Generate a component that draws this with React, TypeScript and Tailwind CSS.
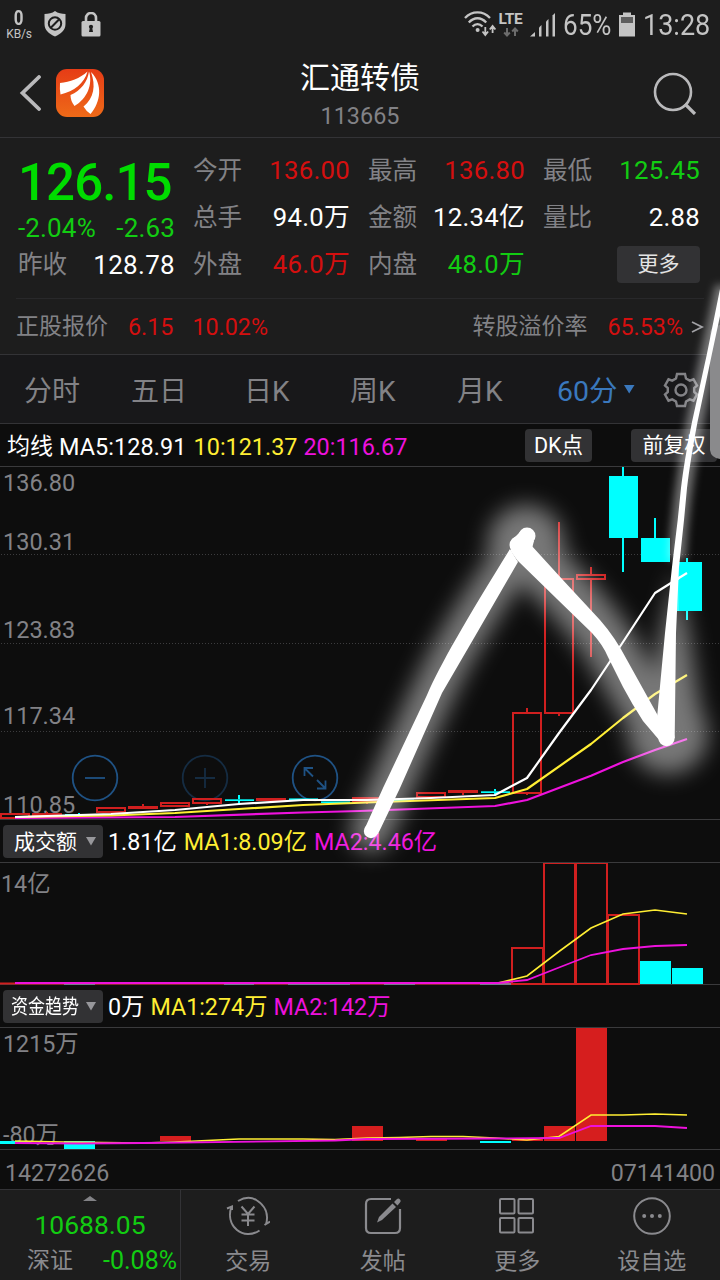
import React from 'react';

const RED = '#d01f1f';
const CYAN = '#00ffff';
const YELLOW = '#ffee33';
const MAGENTA = '#ee11dd';

type Cell = { label: string; value: string; tone: string };

const quoteColumns: { className: string; cells: Cell[] }[] = [
  {
    className: 'ml-[18px] w-[157px]',
    cells: [
      { label: '今开', value: '136.00', tone: 'text-[#d40f0f]' },
      { label: '总手', value: '94.0万', tone: 'text-white' },
      { label: '外盘', value: '46.0万', tone: 'text-[#d40f0f]' },
    ],
  },
  {
    className: 'ml-[18px] w-[157px]',
    cells: [
      { label: '最高', value: '136.80', tone: 'text-[#d40f0f]' },
      { label: '金额', value: '12.34亿', tone: 'text-white' },
      { label: '内盘', value: '48.0万', tone: 'text-[#12cc12]' },
    ],
  },
  {
    className: 'ml-[18px] w-[157px]',
    cells: [
      { label: '最低', value: '125.45', tone: 'text-[#12cc12]' },
      { label: '量比', value: '2.88', tone: 'text-white' },
    ],
  },
];

// x = centre of the candle, every period is 32px wide
type Candle = { x: number; top: number; bottom: number; high?: number; low?: number; up: boolean };

const candles: Candle[] = [
  { x: 15, top: 814, bottom: 818, up: true },
  { x: 47, top: 814, bottom: 816, high: 812, up: true },
  { x: 79, top: 814, bottom: 815.5, high: 813, up: false },
  { x: 111, top: 808, bottom: 812, up: true },
  { x: 143, top: 807, bottom: 808, high: 804, up: true },
  { x: 175, top: 803, bottom: 806, up: true },
  { x: 207, top: 799, bottom: 803, low: 805, up: true },
  { x: 239, top: 799.3, bottom: 801, high: 795, low: 804, up: false },
  { x: 271, top: 799, bottom: 800, up: true },
  { x: 303, top: 798.4, bottom: 800, up: false },
  { x: 335, top: 801.4, bottom: 803, low: 804, up: false },
  { x: 367, top: 798, bottom: 801, low: 804, up: true },
  { x: 399, top: 799.5, bottom: 801, high: 798, up: false },
  { x: 431, top: 793, bottom: 797, up: true },
  { x: 463, top: 791, bottom: 792, low: 795, up: true },
  { x: 495, top: 791.3, bottom: 793, high: 789, low: 795, up: false },
  { x: 527, top: 713, bottom: 793, high: 708, low: 795, up: true },
  { x: 559, top: 579, bottom: 713, high: 522, low: 716, up: true },
  { x: 591, top: 575, bottom: 579, high: 567, low: 657, up: true },
  { x: 623, top: 476, bottom: 538, high: 466, low: 572, up: false },
  { x: 655, top: 538, bottom: 562, high: 518, low: 562, up: false },
  { x: 687, top: 562, bottom: 611, high: 558, low: 620, up: false },
];

const tabs = [
  { label: '分时', className: 'ml-[24px] w-[107px]' },
  { label: '五日', className: 'w-[113px]' },
  { label: '日K', className: 'w-[106px]' },
  { label: '周K', className: 'w-[107px]' },
  { label: '月K', className: 'w-[100px]' },
];

function StatusBar() {
  return (
    <div className="flex h-12 shrink-0 items-center text-[#c4c4c4]">
      <div className="ml-[6px] mt-[2px] flex w-[26px] flex-col items-center">
        <span className="origin-center scale-x-[0.85] text-[20px] font-bold leading-[19px]">0</span>
        <span className="text-[12px] leading-[13px] tracking-[-0.2px]">KB/s</span>
      </div>
      <svg className="ml-[12px]" width="22" height="26" viewBox="0 0 22 26">
        <path d="M11 0 C14 2.2 17.5 3 21.5 3 V13 C21.5 19 17 23 11 25.5 C5 23 .5 19 .5 13 V3 C4.5 3 8 2.2 11 0Z" fill="currentColor" />
        <circle cx="11" cy="12.5" r="6.2" fill="none" stroke="#1d1d1d" strokeWidth="2" />
        <path d="M6.8 16.8 15.2 8.2" stroke="#1d1d1d" strokeWidth="2" />
      </svg>
      <svg className="ml-[15px]" width="20" height="25" viewBox="0 0 20 25">
        <path d="M5 10 V6 a5 5 0 0 1 10 0 V10" fill="none" stroke="currentColor" strokeWidth="2.6" />
        <rect x="0.5" y="9" width="19" height="15.5" rx="1.5" fill="currentColor" />
        <circle cx="10" cy="14.8" r="2.1" fill="#1d1d1d" />
        <path d="M9 15 H11 L12 20 H8Z" fill="#1d1d1d" />
      </svg>

      <div className="ml-auto mr-[10px] flex items-center">
        <svg width="33" height="26" viewBox="0 0 33 26" fill="none" stroke="currentColor">
          <path d="M1 7 C8 -.5 19 -.5 26 7" strokeWidth="2.3" />
          <path d="M4.8 11.5 C10 5.8 17 5.8 22.2 11.5" strokeWidth="2.3" />
          <path d="M8.5 15.5 C11.5 12.3 15.5 12.3 18.5 15.5" strokeWidth="2.3" />
          <circle cx="13.6" cy="19" r="2" fill="currentColor" stroke="none" />
          <path d="M21.3 16 V23 M18.5 20.5 21.3 24 24.1 20.5 M28.6 22 V15 M25.8 18.5 28.6 15 31.4 18.5" strokeWidth="1.8" />
        </svg>
        <div className="flex w-[27px] flex-col items-center">
          <span className="text-[15.5px] font-bold leading-[15px] tracking-[-0.3px]">LTE</span>
          <svg width="16" height="10" viewBox="0 0 16 10" fill="none" stroke="#6c6c6c" strokeWidth="2">
            <path d="M4 1 V8 M1.2 5.5 4 8.5 6.8 5.5 M12 9 V2 M9.2 4.5 12 1.5 14.8 4.5" />
          </svg>
        </div>
        <svg className="ml-[6px]" width="26" height="25" viewBox="0 0 26 25" fill="currentColor">
          <path d="M0 24.5 L5 20 V24.5Z" />
          <path d="M9 15.5 L11.5 13 V24.5 H9Z" />
          <path d="M16 9.5 L18.5 7 V24.5 H16Z" />
          <path d="M22.5 3.5 L25 1 V24.5 H22.5Z" />
        </svg>
        <span className="ml-[7px] mt-[2px] w-[49px] origin-left scale-x-[0.87] text-[30px] leading-[30px]">65%</span>
        <svg className="ml-[7px]" width="16" height="25" viewBox="0 0 16 25">
          <path d="M4 0.5 H12 V3 H16 V24.5 H0 V3 H4Z" fill="currentColor" />
          <rect x="2" y="5" width="12" height="6" fill="#5e5e5e" />
        </svg>
        <span className="ml-[8px] mt-[2px] w-[67px] origin-left scale-x-[0.9] text-[30px] leading-[30px]">13:28</span>
      </div>
    </div>
  );
}

function TitleBar() {
  return (
    <header className="flex h-[90px] shrink-0 items-center border-b border-[#333336]">
      <svg className="ml-[19px]" width="23" height="36" viewBox="0 0 23 36">
        <path d="M20 2 3.5 18 20 34" fill="none" stroke="#b9b9bb" strokeWidth="3.8" strokeLinecap="round" />
      </svg>
      <svg className="ml-[14px]" width="48" height="48" viewBox="0 0 48 48">
        <defs>
          <linearGradient id="logo" x1="0" y1="0" x2="0" y2="1">
            <stop offset="0" stopColor="#e63c16" />
            <stop offset="1" stopColor="#ee6a18" />
          </linearGradient>
        </defs>
        <rect width="48" height="48" rx="11" fill="url(#logo)" />
        <path d="M4 14 C14 13 24 9.5 31.5 2.5 C28.5 14 18 22.5 4.5 25.5 Q3.5 20 4 14Z" fill="#fff" />
        <path d="M14.5 26 C25 21.5 31.5 13 33 2.5 C37 15 31.5 29.5 18.5 37 Q14.5 32 14.5 26Z" fill="#fff" />
        <path d="M35 3 C47 15 45 33 34.5 45 Q30 42 27.5 37.5 C38 29 40 17 35 3Z" fill="#fff" />
      </svg>
      <div className="ml-[196px] mt-[5px] flex w-[120px] flex-col items-center">
        <h1 className="whitespace-nowrap text-[30px] leading-[36px] text-white">汇通转债</h1>
        <span className="mt-[6px] text-[23.4px] leading-[28px] text-[#828286]">113665</span>
      </div>
      <svg className="ml-auto mr-[23px]" width="44" height="44" viewBox="0 0 44 44" fill="none" stroke="#b9b9bb">
        <circle cx="20" cy="21" r="18" strokeWidth="2.6" />
        <path d="M32 33 42 43" strokeWidth="3.2" />
      </svg>
    </header>
  );
}

function QuotePanel() {
  return (
    <section className="flex h-[217px] shrink-0 flex-col border-b border-[#333336] px-4">
      <div className="flex h-[161px] border-b border-[#28282a] pt-[9px]">
        <div className="flex w-[159px] flex-col">
          <span className="ml-[2px] mt-[9px] h-[54px] text-[51px] font-medium leading-[54px] tracking-[-0.9px] text-[#00dc00]">126.15</span>
          <div className="mt-[3px] flex justify-between pl-[2px] text-[26px] leading-[30px] tracking-[0.15px] text-[#12cc12]">
            <span>-2.04%</span>
            <span>-2.63</span>
          </div>
          <div className="mt-[6px] flex items-center justify-between pl-[2px] leading-[30px]">
            <span className="mt-[1px] text-[24.6px] text-[#828286]">昨收</span>
            <span className="text-[26px] tracking-[0.3px] text-white">128.78</span>
          </div>
        </div>
        {quoteColumns.map((column, i) => (
          <div key={i} className={`flex flex-col ${column.className}`}>
            {column.cells.map((cell) => (
              <div key={cell.label} className="flex h-[47px] items-center justify-between whitespace-nowrap">
                <span className="mt-[1px] text-[24.6px] leading-[30px] text-[#828286]">{cell.label}</span>
                <span className={`-mt-[1px] text-[25.7px] leading-[30px] tracking-[0.3px] ${cell.tone}`}>{cell.value}</span>
              </div>
            ))}
            {i === 2 && (
              <button className="mt-[5px] h-[37px] w-[83px] self-end rounded-[4px] bg-[#323234] text-[21px] leading-[37px] text-[#e4e4e4]">
                更多
              </button>
            )}
          </div>
        ))}
      </div>
      <div className="flex h-[55px] items-center whitespace-nowrap text-[23.3px] leading-[30px] text-[#d40f0f]">
        <span className="text-[23px] text-[#828286]">正股报价</span>
        <span className="ml-[20px]">6.15</span>
        <span className="ml-[19px]">10.02%</span>
        <span className="ml-auto text-[23px] text-[#828286]">转股溢价率</span>
        <span className="ml-[20px]">65.53%</span>
        <svg className="ml-[8px]" width="13" height="14" viewBox="0 0 13 14">
          <path d="M1 2 11 7 1 12" fill="none" stroke="#a0a0a4" strokeWidth="1.8" />
        </svg>
      </div>
    </section>
  );
}

function PeriodTabs() {
  return (
    <nav className="flex h-[69px] shrink-0 items-center border-b border-[#333336] bg-[#18181a] text-[28px] leading-[34px] text-[#828286]">
      {tabs.map((tab) => (
        <span key={tab.label} className={`mt-[6px] shrink-0 whitespace-nowrap ${tab.className}`}>
          {tab.label}
        </span>
      ))}
      <span className="mt-[6px] shrink-0 text-[28.5px] text-[#3a78bd]">60分</span>
      <svg className="ml-[6px] mt-[2px] shrink-0" width="11" height="12" viewBox="0 0 11 12">
        <path d="M0 1 H10.5 L5.2 9.5Z" fill="#3a78bd" />
      </svg>
      <svg className="ml-[28px] mt-[2px] shrink-0" width="36" height="36" viewBox="0 0 36 36" fill="none" stroke="#828286" strokeWidth="2.4">
        <path d="M14 2 H22 L23 6.5 L26.8 8.6 L30.5 7.3 L34 13.5 L31.2 16 V20 L34 22.5 L30.5 28.7 L26.8 27.4 L23 29.5 L22 34 H14 L13 29.5 L9.2 27.4 L5.5 28.7 L2 22.5 L4.8 20 V16 L2 13.5 L5.5 7.3 L9.2 8.6 L13 6.5Z" />
        <circle cx="18" cy="18" r="5.5" />
      </svg>
    </nav>
  );
}

function Dropdown({ children }: { children: React.ReactNode }) {
  return (
    <div className="ml-[3px] mr-[5px] flex h-[33px] w-[100px] items-center rounded-[4px] bg-[#323234]">
      {children}
      <svg className="ml-auto mr-[7px]" width="10" height="10" viewBox="0 0 10 10">
        <path d="M0 1 H10 L5 9.5Z" fill="#97979b" />
      </svg>
    </div>
  );
}

function Candles() {
  return (
    <>
      {candles.map((c) => {
        const color = c.up ? RED : CYAN;
        return (
          <g key={c.x}>
            {c.high !== undefined && <path d={`M${c.x} ${c.high}V${c.top}`} stroke={color} strokeWidth="2" />}
            {c.low !== undefined && <path d={`M${c.x} ${c.bottom}V${c.low}`} stroke={color} strokeWidth="2" />}
            {c.up ? (
              <rect x={c.x - 14} y={c.top} width="28" height={c.bottom - c.top} fill="none" stroke={color} strokeWidth="2" />
            ) : (
              <rect x={c.x - 14} y={c.top} width="29" height={c.bottom - c.top} fill={color} />
            )}
          </g>
        );
      })}
    </>
  );
}

function PriceChart() {
  return (
    <section className="relative h-[353px] shrink-0 border-b border-[#3a3a3c] text-[23.5px] leading-[28px] text-[#828286]">
      <div className="flex h-full flex-col pl-[3px] pt-[2px]">
        <span className="h-[60px]">136.80</span>
        <span className="h-[89px]">130.31</span>
        <span className="h-[88px]">123.83</span>
        <span className="h-[90px]">117.34</span>
        <span>110.85</span>
      </div>
      <svg className="absolute left-0 top-0" width="720" height="353" viewBox="0 467 720 353" fill="none">
        <path d="M1 554.5H719M1 643.5H719M1 731.5H719" stroke="#3c3c3e" strokeDasharray="1 2" />
        <g stroke="#1f5284" strokeWidth="1.8">
          <circle cx="95" cy="778" r="22.3" />
          <path d="M85 778H105" />
          <g opacity="0.45">
            <circle cx="205" cy="778" r="22.3" />
            <path d="M195 778H215M205 768V788" />
          </g>
          <circle cx="315" cy="778" r="22.3" />
          <path d="M313 776.5 304.5 768M304.5 776V768H313M317 780 325.5 788.5M325.5 780.5V788.5H317" />
        </g>
        <Candles />
        <g strokeLinejoin="round">
          <path d="M15 818 175 817 303 812.5 360 811 495 806 527 800 591 775.7 623 762 655 750 687 739" stroke={MAGENTA} strokeWidth="2.2" />
          <path d="M15 817 111 815.5 175 813 239 809 303 805 367 802.5 495 798 527 789 591 744 623 718 655 694 687 675" stroke={YELLOW} strokeWidth="2.2" />
          <path d="M15 817 111 814 175 810 239 804 303 800 367 800 431 798 495 795 527 778 559 733 591 690 623 642 655 593 687 573" stroke="#fff" strokeWidth="2.2" />
        </g>
      </svg>
    </section>
  );
}

function VolumeChart() {
  return (
    <section className="relative h-[122px] shrink-0 border-b border-[#3a3a3c]">
      <span className="ml-[1px] mt-[7px] block text-[23.3px] leading-[28px] text-[#828286]">14亿</span>
      <svg className="absolute left-0 top-0" width="720" height="122" viewBox="0 863 720 122" fill="none">
        <path d="M0 983.5H512" stroke={RED} strokeWidth="2" />
        <path d="M64 984H95M224 984H254M288 984H350M384 984H415M480 984H512" stroke="#66ccee" strokeWidth="1" />
        <g stroke={RED} strokeWidth="2">
          <rect x="512" y="948" width="31" height="36" />
          <rect x="544" y="863" width="31" height="121" />
          <rect x="576" y="863" width="31" height="121" />
          <rect x="608" y="915" width="31" height="69" />
        </g>
        <path d="M640 961H671V984H640ZM672 968H703V984H672Z" fill={CYAN} />
        <path d="M15 983H498L527 976 559 951.5 591 928 623 914 655 910 687 914" stroke={YELLOW} strokeWidth="1.6" />
        <path d="M15 983H498L527 980 559 967.5 591 955 623 949 655 946 687 945" stroke={MAGENTA} strokeWidth="1.8" />
      </svg>
    </section>
  );
}

function FundChart() {
  return (
    <section className="relative h-[122px] shrink-0 border-b border-[#3a3a3c] text-[23.3px] leading-[28px] text-[#828286]">
      <div className="flex h-full flex-col pl-[3px] pt-[2px]">
        <span className="h-[96px]">1215万</span>
        <span>-80万</span>
      </div>
      <svg className="absolute left-0 top-0" width="720" height="122" viewBox="0 1028 720 122" fill="none">
        <path d="M160 1136H191V1141H160ZM352 1126H383V1141H352ZM416 1138H447V1141H416ZM512 1139H543V1141H512ZM544 1126H575V1141H544ZM576 1027H607V1141H576Z" fill="#d61e1e" />
        <path d="M0 1141H31V1144H0ZM64 1141H95V1149H64ZM480 1141H511V1143H480Z" fill={CYAN} />
        <path d="M15 1141 64 1142 143 1143 175 1142 239 1139 303 1139 335 1139.6 367 1138 399 1137.5 431 1136.5 463 1136.5 495 1138 527 1140 559 1136.5 591 1115 623 1115 655 1114 687 1115" stroke={YELLOW} strokeWidth="1.6" />
        <path d="M15 1143 79 1143.5 143 1143 335 1140.5 367 1139 495 1138.5 559 1138 591 1126 655 1126 687 1128" stroke={MAGENTA} strokeWidth="1.8" />
      </svg>
    </section>
  );
}

function BottomNav() {
  return (
    <footer className="flex h-[90px] shrink-0 text-[23px] leading-[28px] text-[#8a8a8e]">
      <div className="flex w-[181px] flex-col items-center border-r border-[#333336]">
        <svg className="mt-[6px]" width="14" height="5" viewBox="0 0 14 5">
          <path d="M0 5 7 0 14 5Z" fill="#828286" />
        </svg>
        <span className="mt-[9px] text-[26.5px] leading-[30px] text-[#12cc12]">10688.05</span>
        <div className="mt-[7px] flex w-full justify-between pl-[27px] pr-[3px]">
          <span>深证</span>
          <span className="text-[25px] text-[#12cc12]">-0.08%</span>
        </div>
      </div>
      <div className="mr-[1px] grid flex-1 grid-cols-4 text-center">
        <div className="flex flex-col items-center pt-[6px]">
          <svg width="44" height="40" viewBox="0 0 44 40" fill="none" stroke="currentColor" strokeWidth="2">
            <path d="M12 5 C18 1.5 25 .5 31 4.5 C39 9.5 43 18 40 28.5 M38.5 29 L44 25.5" />
            <path d="M1 12.5 L6 10.5 V14 M5.5 10.5 C2.5 19 4 28 11 34 C17 39 26 39.5 33.5 34.5" />
            <path d="M15.5 10.5 22 18 28.5 10.5M22 18V30M15.5 18.5H28.5M15.5 24.5H28.5" />
          </svg>
          <span className="mt-[12px]">交易</span>
        </div>
        <div className="flex flex-col items-center pt-[6px]">
          <svg width="40" height="40" viewBox="0 0 40 40" fill="none" stroke="currentColor" strokeWidth="2.2">
            <path d="M28 3 H8 Q3 3 3 8 V32 Q3 37 8 37 H32 Q37 37 37 32 V13" />
            <path d="M14 26.5 16 21 29.5 7.5 33 11 19 24Z" fill="currentColor" stroke="none" />
            <path d="M31 6 34 3 Q35.5 2 37 3.5 T37 6.5 L34.5 9.5Z" fill="currentColor" stroke="none" />
          </svg>
          <span className="mt-[12px]">发帖</span>
        </div>
        <div className="flex flex-col items-center pt-[6px]">
          <svg width="40" height="40" viewBox="0 0 40 40" fill="none" stroke="currentColor" strokeWidth="2">
            <rect x="3" y="3" width="14.5" height="14.5" rx="1" />
            <rect x="21.5" y="3" width="14.5" height="14.5" rx="1" />
            <rect x="3" y="22" width="14.5" height="14.5" rx="1" />
            <rect x="21.5" y="22" width="14.5" height="14.5" rx="1" />
          </svg>
          <span className="mt-[12px]">更多</span>
        </div>
        <div className="flex flex-col items-center pt-[6px]">
          <svg width="40" height="40" viewBox="0 0 40 40" fill="none" stroke="currentColor" strokeWidth="2">
            <circle cx="20" cy="20" r="17.8" />
            <g fill="currentColor" stroke="none">
              <circle cx="12.2" cy="20" r="2" />
              <circle cx="20" cy="20" r="2" />
              <circle cx="27.8" cy="20" r="2" />
            </g>
          </svg>
          <span className="mt-[12px]">设自选</span>
        </div>
      </div>
    </footer>
  );
}

// Hand drawn marker with its glow, floats over the whole screen
function Marker() {
  return (
    <svg className="pointer-events-none absolute left-0 top-0" width="720" height="1280" viewBox="0 0 720 1280" fill="none">
      <defs>
        <filter id="glow" x="0" y="0" width="760" height="1280" filterUnits="userSpaceOnUse">
          <feGaussianBlur stdDeviation="11" />
        </filter>
        <filter id="glowSmall" x="0" y="0" width="760" height="1280" filterUnits="userSpaceOnUse">
          <feGaussianBlur stdDeviation="4" />
        </filter>
      </defs>
      <g filter="url(#glow)" opacity="0.44">
        <path d="M371 831 C390 790 410 740 434 690 C455 645 490 590 524 543" stroke="#fff" strokeWidth="42" strokeLinecap="round" />
        <path d="M524 548 C560 585 595 620 615 655 C635 690 650 715 667 735" stroke="#fff" strokeWidth="52" strokeLinecap="round" />
        <path d="M648 735 L660 640 L676 570 L690 640 L704 735Z" fill="#fff" />
        <circle cx="526" cy="543" r="38" fill="#fff" />
        <circle cx="668" cy="734" r="40" fill="#fff" />
      </g>
      <path d="M677 560 C680 505 688 448 709 355 L724 286" stroke="#fff" strokeWidth="17" opacity="0.4" filter="url(#glowSmall)" />
      <path d="M720 325 Q710 325 710 335 V450 Q711 458 720 459Z" fill="#8a8a8c" />
      <path d="M680 562H702V611H679Z" fill={CYAN} />
      <path d="M674 581 687 573" stroke="#fff" strokeWidth="2.2" />
      <g fill="#fff">
        <path d="M365 828 L383 788 L427 695 C440 665 466 620 510 549 L518 562 L474 638 L442 693 L400 788 L378 834Z" />
        <circle cx="371" cy="831" r="7.2" />
        <path d="M511 541 L521 531 L534 541 L530 556 L518 561 Q508 549 511 541Z" />
        <circle cx="518.5" cy="545" r="9" />
        <circle cx="527" cy="536" r="8.5" />
        <path d="M510 550 L518 561 L557 599 L592 633 Q603 645 608 657 L623 687 Q632 704 643 721 L660 741 L668 735 L657 714 L627 660 Q615 637 600 620 L562 579 L531 545Z" />
        <path d="M657 718 L665 633 L672 567 L677.7 520 L681 488 Q684 462 692 422 L706.7 355 L720 289 V316 L711.7 355 L697.5 422 Q690 462 687 488 L684 520 L679 567 L676 633 L674.7 738 L660 742Z" />
        <circle cx="666.5" cy="738" r="8.2" />
      </g>
    </svg>
  );
}

export default function App() {
  return (
    <main className="relative flex h-[1280px] w-[720px] flex-col overflow-hidden bg-[#1d1d1d] font-['Roboto','Noto_Sans_CJK_SC',sans-serif]">
      <StatusBar />
      <TitleBar />
      <QuotePanel />
      <PeriodTabs />
      <div className="flex shrink-0 flex-col bg-[#0d0d0d]">
        <div className="flex h-[43px] items-center whitespace-nowrap border-b border-[#3a3a3c] pl-[7px] text-[23.4px] leading-[30px] text-white">
          <span className="mt-[3px] text-[23px]">均线</span>
          <span className="ml-[6px] mt-[3px] tracking-[0.1px]">MA5:128.91</span>
          <span className="ml-[7px] mt-[3px] text-[#ffee33]">10:121.37</span>
          <span className="ml-[6px] mt-[3px] text-[#ee11dd]">20:116.67</span>
          <button className="ml-auto h-[33px] w-[67px] rounded-[4px] bg-[#323234] text-[21.5px] leading-[33px]">DK点</button>
          <button className="ml-[39px] mr-[3px] h-[33px] w-[86px] rounded-[4px] bg-[#323234] text-[21px] leading-[33px]">前复权</button>
        </div>
        <PriceChart />
        <div className="flex h-[43px] items-center whitespace-nowrap border-b border-[#3a3a3c] text-[23.3px] leading-[30px] text-white">
          <Dropdown>
            <span className="ml-[11px] mt-[1px] text-[21px]">成交额</span>
          </Dropdown>
          <span className="mt-[2px]">1.81亿</span>
          <span className="ml-[7px] mt-[2px] text-[#ffee33]">MA1:8.09亿</span>
          <span className="ml-[7px] mt-[2px] text-[#ee11dd]">MA2:4.46亿</span>
        </div>
        <VolumeChart />
        <div className="flex h-[43px] items-center whitespace-nowrap border-b border-[#3a3a3c] text-[23.3px] leading-[30px] text-white">
          <Dropdown>
            <span className="ml-[8px] mt-[1px] w-[68px] origin-left scale-x-[0.85] text-[20px]">资金趋势</span>
          </Dropdown>
          <span className="mt-[2px]">0万</span>
          <span className="ml-[6px] mt-[2px] text-[#ffee33]">MA1:274万</span>
          <span className="ml-[6px] mt-[2px] text-[#ee11dd]">MA2:142万</span>
        </div>
        <FundChart />
        <div className="flex h-[40px] items-center justify-between border-b border-[#333336] pl-[5px] pr-[5px] pt-[7px] text-[23.2px] leading-[30px] text-[#828286]">
          <span>14272626</span>
          <span>07141400</span>
        </div>
      </div>
      <BottomNav />
      <Marker />
    </main>
  );
}
